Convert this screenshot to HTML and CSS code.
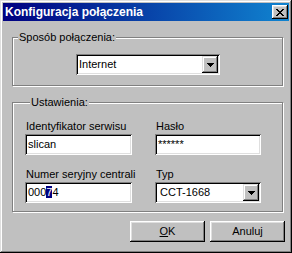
FILE: index.html
```html
<!DOCTYPE html>
<html lang="pl">
<head>
<meta charset="utf-8">
<title>Konfiguracja połączenia</title>
<link rel="stylesheet" href="styles.css">
</head>
<body>
<div class="window">
  <div class="titlebar">
    <span class="title">Konfiguracja połączenia</span>
    <div class="close">
      <svg width="8" height="7" viewBox="0 0 8 7" shape-rendering="crispEdges">
        <rect x="0" y="0" width="2" height="1"/><rect x="6" y="0" width="2" height="1"/>
        <rect x="1" y="1" width="2" height="1"/><rect x="5" y="1" width="2" height="1"/>
        <rect x="2" y="2" width="4" height="1"/>
        <rect x="3" y="3" width="2" height="1"/>
        <rect x="2" y="4" width="4" height="1"/>
        <rect x="1" y="5" width="2" height="1"/><rect x="5" y="5" width="2" height="1"/>
        <rect x="0" y="6" width="2" height="1"/><rect x="6" y="6" width="2" height="1"/>
      </svg>
    </div>
  </div>

  <div class="group group-conn">
    <div class="legend">Sposób połączenia:</div>
    <div class="sunken combo combo-conn">
      <span class="value">Internet</span>
      <span class="drop">
        <svg width="7" height="4" viewBox="0 0 7 4" shape-rendering="crispEdges">
          <rect x="0" y="0" width="7" height="1"/><rect x="1" y="1" width="5" height="1"/>
          <rect x="2" y="2" width="3" height="1"/><rect x="3" y="3" width="1" height="1"/>
        </svg>
      </span>
    </div>
  </div>

  <div class="group group-settings">
    <div class="legend">Ustawienia:</div>
    <div class="grid">
      <div class="field">
        <div class="label">Identyfikator serwisu</div>
        <div class="sunken edit"><span class="value">slican</span></div>
      </div>
      <div class="field">
        <div class="label">Hasło</div>
        <div class="sunken edit"><span class="value pass">******</span></div>
      </div>
      <div class="field">
        <div class="label">Numer seryjny centrali</div>
        <div class="sunken edit"><span class="value">000<span class="sel">7</span>4</span></div>
      </div>
      <div class="field">
        <div class="label">Typ</div>
        <div class="sunken combo">
          <span class="value value-typ">CCT-1668</span>
          <span class="drop">
            <svg width="7" height="4" viewBox="0 0 7 4" shape-rendering="crispEdges">
              <rect x="0" y="0" width="7" height="1"/><rect x="1" y="1" width="5" height="1"/>
              <rect x="2" y="2" width="3" height="1"/><rect x="3" y="3" width="1" height="1"/>
            </svg>
          </span>
        </div>
      </div>
    </div>
  </div>

  <div class="buttons">
    <div class="btn"><span><u>O</u>K</span></div>
    <div class="btn"><span>Anuluj</span></div>
  </div>
</div>
</body>
</html>
```

FILE: styles.css
```css
* { box-sizing: border-box; }

html, body {
  margin: 0;
  padding: 0;
  background: #c0c0c0;
}

body {
  font-family: "Liberation Sans", Arial, sans-serif;
  font-size: 11px;
  line-height: 13px;
  color: #000;
}

.window {
  width: 292px;
  height: 253px;
  padding: 3px;
  background: #c0c0c0;
  display: flex;
  flex-direction: column;
  box-shadow:
    inset -1px -1px 0 #000,
    inset 1px 1px 0 #dfdfdf,
    inset -2px -2px 0 #808080,
    inset 2px 2px 0 #fff;
}

.titlebar {
  height: 18px;
  display: flex;
  align-items: center;
  justify-content: space-between;
  padding-left: 2px;
  padding-right: 1px;
  background: linear-gradient(to right, #000080, #1084d0);
}

.title {
  color: #fff;
  font-weight: bold;
  font-size: 12px;
  line-height: 18px;
}

.close {
  width: 16px;
  height: 14px;
  background: #c0c0c0;
  display: flex;
  align-items: center;
  justify-content: center;
  box-shadow:
    inset -1px -1px 0 #000,
    inset 1px 1px 0 #fff,
    inset -2px -2px 0 #808080,
    inset 2px 2px 0 #dfdfdf;
}

.close svg { fill: #000; display: block; }

.group {
  width: 271px;
  margin-left: 9px;
  margin-top: 16px;
  border: 1px solid #808080;
  box-shadow: 1px 1px 0 #fff, inset 1px 1px 0 #fff;
}

.legend {
  width: fit-content;
  margin: -7px 0 0 5px;
  padding: 0 1px;
  background: #c0c0c0;
  line-height: 13px;
}

.group-conn {
  padding-bottom: 10px;
}

.combo-conn {
  margin-top: 10px;
  margin-left: 63px;
  width: 144px;
}

.group-settings {
  padding: 0 0 8px 12px;
}

.grid {
  margin-top: 11px;
  display: grid;
  grid-template-columns: 107px 106px;
  column-gap: 23px;
  row-gap: 13px;
}

.label {
  padding-left: 1px;
  margin-bottom: 1px;
  white-space: nowrap;
}

.sunken {
  height: 21px;
  padding: 2px;
  background: #fff;
  display: flex;
  align-items: center;
  box-shadow:
    inset 1px 1px 0 #808080,
    inset -1px -1px 0 #fff,
    inset 2px 2px 0 #000,
    inset -2px -2px 0 #dfdfdf;
}

.value {
  flex: 1;
  padding-left: 1px;
  white-space: nowrap;
}

.value-typ { padding-left: 3px; }

.pass { letter-spacing: 0; }

.sel {
  background: #000080;
  color: #fff;
}

.drop {
  width: 16px;
  height: 17px;
  background: #c0c0c0;
  display: flex;
  align-items: center;
  justify-content: center;
  box-shadow:
    inset -1px -1px 0 #000,
    inset 1px 1px 0 #dfdfdf,
    inset -2px -2px 0 #808080,
    inset 2px 2px 0 #fff;
}

.drop svg { fill: #000; display: block; }

.buttons {
  margin-top: 9px;
  display: flex;
  justify-content: flex-end;
  gap: 5px;
  padding-right: 4px;
}

.btn {
  width: 75px;
  height: 21px;
  display: flex;
  align-items: center;
  justify-content: center;
  background: #c0c0c0;
  box-shadow:
    inset -1px -1px 0 #000,
    inset 1px 1px 0 #fff,
    inset -2px -2px 0 #808080,
    inset 2px 2px 0 #dfdfdf;
}

.btn u { text-decoration: underline; }
```
